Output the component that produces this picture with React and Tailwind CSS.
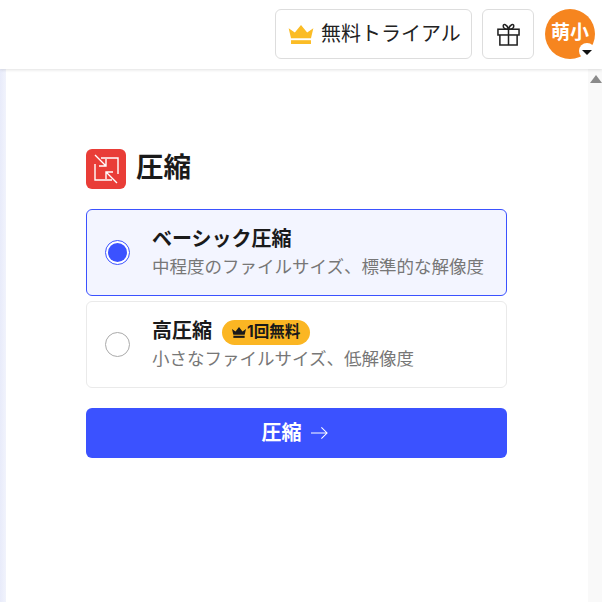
const Crown = ({ className }) => (
  <svg viewBox="0 0 26 20" className={className} fill="currentColor">
    <path d="M0 3.5 L6.5 8 L13 0 L19.5 8 L26 3.5 L23.5 14 H2.5 Z" />
    <rect x="2.5" y="16" width="21" height="4" />
  </svg>
);

const CompressIcon = () => (
  <div className="flex h-10 w-10 items-center justify-center rounded-md bg-[#e93d37]">
    <svg viewBox="0 0 40 40" className="h-10 w-10" fill="none" stroke="white" strokeWidth="1.4">
      <path d="M15 9 H32 V25" />
      <path d="M26 31 H9 V15" />
      <path d="M9 6 L20 17 M20 10 V17 H13" />
      <path d="M31 34 L20 23 M20 30 V23 H27" />
    </svg>
  </div>
);

const GiftIcon = () => (
  <svg viewBox="0 0 24 24" className="h-[23px] w-[23px]" fill="none" stroke="#222" strokeWidth="1.6">
    <rect x="1" y="6.5" width="22" height="6" />
    <path d="M3 12.5 V23 H21 V12.5" />
    <path d="M12 6.5 V23" />
    <path d="M12 6.5 C9 6.5 6.5 5.5 6.5 3 C6.5 0.5 10.5 1 12 6.5 C13.5 1 17.5 0.5 17.5 3 C17.5 5.5 15 6.5 12 6.5 Z" />
  </svg>
);

const Radio = ({ checked }) =>
  checked ? (
    <span className="flex h-[25px] w-[25px] shrink-0 items-center justify-center rounded-full border border-[#3b52ff] bg-white">
      <span className="h-[19px] w-[19px] rounded-full bg-[#3b52ff]" />
    </span>
  ) : (
    <span className="h-[25px] w-[25px] shrink-0 rounded-full border border-[#aaaaaa] bg-white" />
  );

export default function App() {
  return (
    <div className="flex h-[602px] w-[602px] flex-col overflow-hidden bg-white font-['Inter','Noto_Sans_CJK_JP',sans-serif]">
      {/* HEADER */}
      <header className="relative z-10 flex h-[69px] shrink-0 items-start justify-end gap-[10px] bg-white pt-[9px] pr-[7px] shadow-[0_1px_3px_rgba(0,0,0,0.12)]">
        <button className="flex h-[50px] w-[197px] items-center gap-[7px] rounded-md border border-[#dddddd] pl-[12px] text-[20px] text-[#222222]">
          <Crown className="h-[19px] w-[26px] text-[#fbbc25]" />
          <span className="mb-[1px]">無料トライアル</span>
        </button>
        <button className="flex h-[50px] w-[52px] items-center justify-center rounded-md border border-[#dddddd]">
          <GiftIcon />
        </button>
        <div className="relative ml-[1px] flex h-[50px] w-[50px] items-center justify-center rounded-full bg-[#f6851f] text-[19px] font-bold text-white">
          <span className="mb-[2px]">萌小</span>
          <span className="absolute right-0 bottom-0 flex h-[16px] w-[16px] items-center justify-center rounded-full bg-white">
            <span className="mt-[2px] h-0 w-0 border-x-[5px] border-t-[5px] border-x-transparent border-t-[#111111]" />
          </span>
        </div>
      </header>

      <div className="flex min-h-0 flex-1">
        {/* LEFT STRIP */}
        <div className="w-[6px] shrink-0 bg-gradient-to-r from-[#e8ebfa] to-[#f1f3fc]" />

        {/* MAIN */}
        <main className="flex-1 pt-[80px] pl-[80px]">
          <div className="flex w-[421px] flex-col">
            <div className="flex items-center gap-[10px]">
              <CompressIcon />
              <h1 className="mb-[3px] text-[27.5px] leading-[37px] font-bold text-[#1a1a1a]">圧縮</h1>
            </div>

            <div className="mt-[20px] flex h-[87px] items-center gap-[22px] rounded-md border border-[#3b52ff] bg-[#f3f5ff] pl-[18px]">
              <Radio checked />
              <div className="flex flex-col">
                <span className="pb-[2px] text-[20px] leading-[26px] font-bold text-[#1a1a1a]">ベーシック圧縮</span>
                <span className="text-[17.5px] leading-[25px] text-[#777777]">中程度のファイルサイズ、標準的な解像度</span>
              </div>
            </div>

            <div className="mt-[5px] flex h-[87px] items-center gap-[22px] rounded-md border border-[#eaeaea] bg-white pl-[18px]">
              <Radio />
              <div className="flex flex-col">
                <div className="flex h-[28px] items-center gap-[10px]">
                  <span className="pb-[2px] text-[20px] leading-[26px] font-bold text-[#1a1a1a]">高圧縮</span>
                  <span className="flex h-[25px] items-center gap-[1px] rounded-full bg-[#fbb623] px-[10px] text-[15.5px] font-bold text-[#1a1a1a]">
                    <Crown className="h-[11px] w-[14px] text-[#1a1a1a]" />
                    1回無料
                  </span>
                </div>
                <span className="text-[17.5px] leading-[25px] text-[#777777]">小さなファイルサイズ、低解像度</span>
              </div>
            </div>

            <button className="mt-[20px] flex h-[50px] items-center justify-center gap-[9px] rounded-md bg-[#3b52ff] pr-[4px] text-[20px] font-bold text-white">
              <span className="mb-[1px]">圧縮</span>
              <svg viewBox="0 0 18 14" className="h-[14px] w-[17px]" fill="none" stroke="white" strokeWidth="1.1">
                <path d="M0 7 H17 M11 1 L17 7 L11 13" />
              </svg>
            </button>
          </div>
        </main>

        {/* SCROLLBAR */}
        <div className="flex w-[14px] shrink-0 justify-end bg-[#f9f9f9] pt-[6px]">
          <span className="h-0 w-0 border-x-[6px] border-b-[8px] border-x-transparent border-b-[#8a8a8a]" />
        </div>
      </div>
    </div>
  );
}
